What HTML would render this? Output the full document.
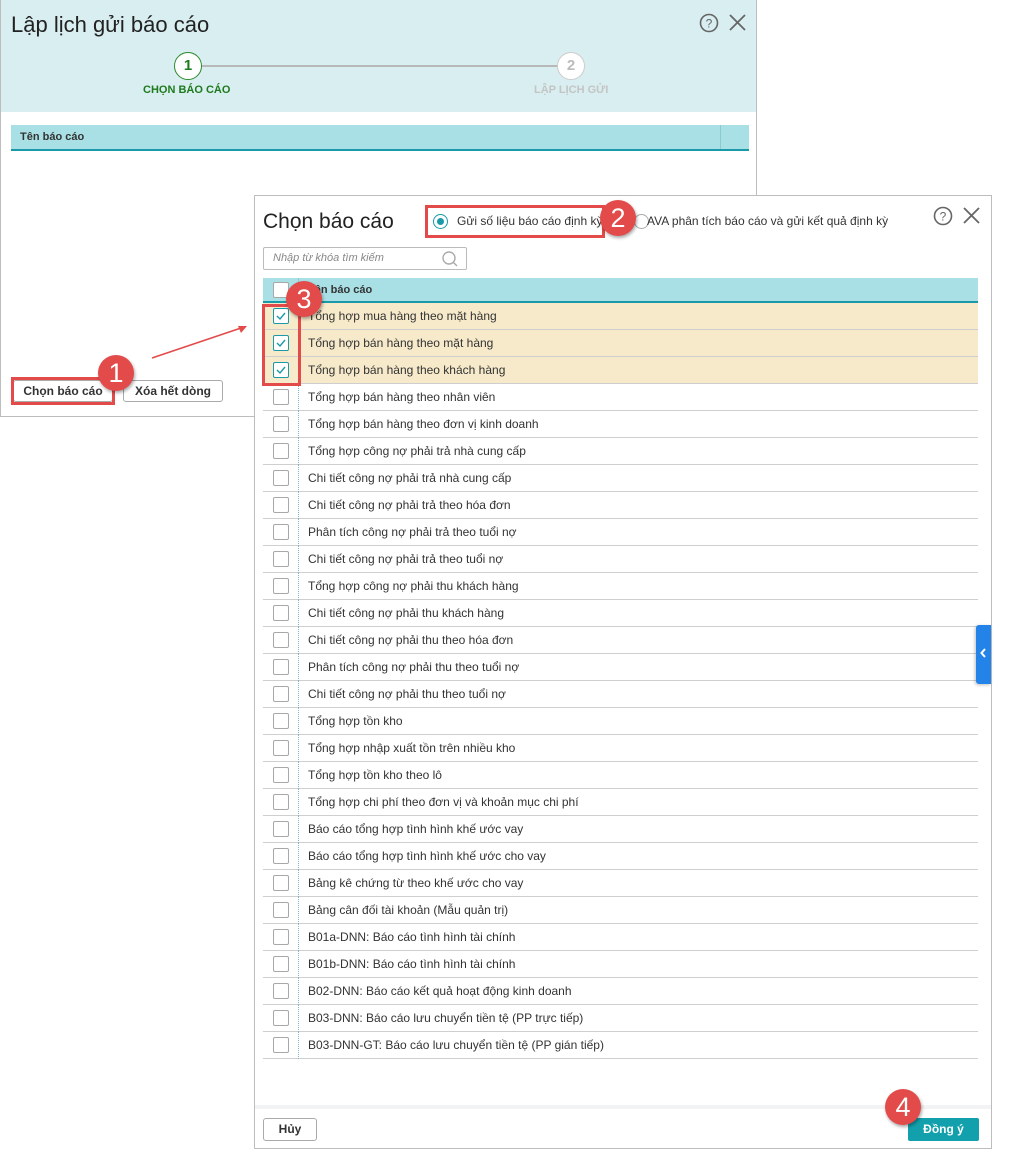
<!DOCTYPE html>
<html><head><meta charset="utf-8"><style>
*{box-sizing:border-box;margin:0;padding:0}
body{width:1009px;height:1158px;background:#fff;position:relative;overflow:hidden;font-family:"Liberation Sans",Arial,sans-serif;color:#222}
.abs{position:absolute}
.back{left:0;top:0;width:757px;height:417px;border:1px solid #bdbdbd;border-top:none;background:#fff}
.bhead{left:1px;top:0;width:755px;height:112px;background:#d9eef0}
.front{left:254px;top:195px;width:738px;height:954px;border:1px solid #bdbdbd;background:#fff}
.row{position:absolute;left:263px;width:715px;height:27px;border-bottom:1px solid #cfcfcf;font-size:12px;line-height:26px}
.row .cb{position:absolute;left:10px;top:5px;width:16px;height:16px;border:1px solid #a8a8a8;border-radius:2px;background:#fff}
.row .dv{position:absolute;left:35px;top:0;height:27px;border-left:1px dotted #7fb8c9}
.row .t{position:absolute;left:45px;top:0;color:#333}
.row.sel{background:#f7eacb}
.row.sel .cb{border-color:#1a9aa8}
.badge{position:absolute;width:36px;height:36px;border-radius:50%;background:#e34a4a;color:#fff;font-size:27px;line-height:36px;text-align:center;box-shadow:1px 2px 3px rgba(0,0,0,.35)}
.rbox{position:absolute;border:3px solid #e34a4a}
.btn{position:absolute;border:1px solid #aaa;border-radius:3px;background:#fff;font-size:12px;font-weight:bold;text-align:center;color:#333}
</style></head><body>
<div class="abs back"></div>
<div class="abs bhead"></div>
<div class="abs" style="left:11px;top:12px;font-size:22px;color:#222">Lập lịch gửi báo cáo</div>
<svg class="abs" style="left:699px;top:13px" width="50" height="20" viewBox="0 0 50 20"><circle cx="10" cy="10" r="8.5" fill="none" stroke="#666" stroke-width="1.6"/><text x="10" y="14.5" font-size="12" text-anchor="middle" fill="#666" font-family="Liberation Sans">?</text><path d="M31 2 L46 17 M46 2 L31 17" stroke="#666" stroke-width="1.8"/></svg>
<div class="abs" style="left:201px;top:65px;width:358px;height:2px;background:#b8b8b8"></div>
<div class="abs" style="left:174px;top:52px;width:28px;height:28px;border-radius:50%;border:1.5px solid #2a8a2a;background:#fff;color:#1e7a1e;font-weight:bold;font-size:15px;text-align:center;line-height:25px">1</div>
<div class="abs" style="left:557px;top:52px;width:28px;height:28px;border-radius:50%;border:1.5px solid #ccc;background:#fff;color:#bbb;font-weight:bold;font-size:15px;text-align:center;line-height:25px">2</div>
<div class="abs" style="left:143px;top:84px;font-size:11px;font-weight:bold;color:#1e7a1e">CHỌN BÁO CÁO</div>
<div class="abs" style="left:534px;top:84px;font-size:11px;font-weight:bold;color:#c4c4c4">LẬP LỊCH GỬI</div>
<div class="abs" style="left:11px;top:125px;width:738px;height:26px;background:#a9e0e5;border-bottom:2px solid #1a9aa8"></div>
<div class="abs" style="left:720px;top:125px;height:24px;border-left:1px solid #8cc"></div>
<div class="abs" style="left:20px;top:131px;font-size:11px;font-weight:bold;color:#333">Tên báo cáo</div>
<div class="btn" style="left:13px;top:380px;width:100px;height:22px;line-height:20px">Chọn báo cáo</div>
<div class="btn" style="left:123px;top:380px;width:100px;height:22px;line-height:20px">Xóa hết dòng</div>
<div class="rbox" style="left:11px;top:377px;width:104px;height:28px"></div>
<svg class="abs" style="left:0;top:0" width="1009" height="1158"><path d="M152 358 L244 327" stroke="#e34a4a" stroke-width="1.6"/><path d="M247 326 L238 326 L241 333 Z" fill="#e34a4a"/></svg>

<div class="abs front"></div>
<div class="abs" style="left:263px;top:210px;font-size:21px;color:#222">Chọn báo cáo</div>
<div class="abs" style="left:433px;top:214px;width:15px;height:15px;border-radius:50%;border:1.5px solid #1a9aa8"></div>
<div class="abs" style="left:437px;top:218px;width:7px;height:7px;border-radius:50%;background:#1a9aa8"></div>
<div class="abs" style="left:457px;top:214px;font-size:12px;color:#333">Gửi số liệu báo cáo định kỳ</div>
<div class="abs" style="left:634px;top:214px;width:15px;height:15px;border-radius:50%;border:1.5px solid #aaa"></div>
<div class="abs" style="left:647px;top:214px;font-size:12px;color:#333">AVA phân tích báo cáo và gửi kết quả định kỳ</div>
<svg class="abs" style="left:933px;top:206px" width="50" height="20" viewBox="0 0 50 20"><circle cx="10" cy="10" r="8.5" fill="none" stroke="#666" stroke-width="1.6"/><text x="10" y="14.5" font-size="12" text-anchor="middle" fill="#666" font-family="Liberation Sans">?</text><path d="M31 2 L46 17 M46 2 L31 17" stroke="#666" stroke-width="1.8"/></svg>
<div class="abs" style="left:263px;top:247px;width:204px;height:23px;border:1px solid #bbb;border-radius:2px"></div>
<div class="abs" style="left:273px;top:252px;font-size:11px;font-style:italic;color:#888">Nhập từ khóa tìm kiếm</div>
<svg class="abs" style="left:441px;top:250px" width="18" height="18"><circle cx="8" cy="8" r="6" fill="none" stroke="#aaa" stroke-width="1.4"/><path d="M12.5 12.5 L16 16" stroke="#aaa" stroke-width="1.4"/></svg>
<div class="abs" style="left:263px;top:278px;width:715px;height:25px;background:#a9e0e5;border-bottom:2px solid #1a9aa8"></div>
<div class="abs" style="left:273px;top:282px;width:16px;height:16px;border:1px solid #a8a8a8;border-radius:2px;background:#fff"></div>
<div class="abs" style="left:298px;top:278px;height:24px;border-left:1px solid #8cc"></div>
<div class="abs" style="left:308px;top:284px;font-size:11px;font-weight:bold;color:#333">Tên báo cáo</div>
<div id="rows"></div>
<div class="abs" style="left:255px;top:1105px;width:736px;height:4px;background:#f1f3f5"></div>
<div class="btn" style="left:263px;top:1118px;width:54px;height:23px;line-height:21px">Hủy</div>
<div class="abs" style="left:908px;top:1118px;width:71px;height:23px;background:#12a0ad;border-radius:2px;color:#fff;font-weight:bold;font-size:12px;text-align:center;line-height:23px">Đồng ý</div>
<div class="abs" style="left:976px;top:625px;width:15px;height:59px;background:#2383e8;border-radius:3px 0 0 3px;box-shadow:-1px 1px 3px rgba(0,0,0,.25)"></div>
<svg class="abs" style="left:979px;top:647px" width="9" height="12"><path d="M6 2 L2.5 6 L6 10" stroke="#fff" stroke-width="2" fill="none"/></svg>

<div class="rbox" style="left:425px;top:205px;width:180px;height:33px"></div>
<div class="rbox" style="left:262px;top:304px;width:39px;height:82px"></div>
<div class="badge" style="left:98px;top:355px">1</div>
<div class="badge" style="left:600px;top:200px">2</div>
<div class="badge" style="left:286px;top:281px">3</div>
<div class="badge" style="left:885px;top:1089px">4</div>
<script>
var items=["Tổng hợp mua hàng theo mặt hàng","Tổng hợp bán hàng theo mặt hàng","Tổng hợp bán hàng theo khách hàng","Tổng hợp bán hàng theo nhân viên","Tổng hợp bán hàng theo đơn vị kinh doanh","Tổng hợp công nợ phải trả nhà cung cấp","Chi tiết công nợ phải trả nhà cung cấp","Chi tiết công nợ phải trả theo hóa đơn","Phân tích công nợ phải trả theo tuổi nợ","Chi tiết công nợ phải trả theo tuổi nợ","Tổng hợp công nợ phải thu khách hàng","Chi tiết công nợ phải thu khách hàng","Chi tiết công nợ phải thu theo hóa đơn","Phân tích công nợ phải thu theo tuổi nợ","Chi tiết công nợ phải thu theo tuổi nợ","Tổng hợp tồn kho","Tổng hợp nhập xuất tồn trên nhiều kho","Tổng hợp tồn kho theo lô","Tổng hợp chi phí theo đơn vị và khoản mục chi phí","Báo cáo tổng hợp tình hình khế ước vay","Báo cáo tổng hợp tình hình khế ước cho vay","Bảng kê chứng từ theo khế ước cho vay","Bảng cân đối tài khoản (Mẫu quản trị)","B01a-DNN: Báo cáo tình hình tài chính","B01b-DNN: Báo cáo tình hình tài chính","B02-DNN: Báo cáo kết quả hoạt động kinh doanh","B03-DNN: Báo cáo lưu chuyển tiền tệ (PP trực tiếp)","B03-DNN-GT: Báo cáo lưu chuyển tiền tệ (PP gián tiếp)"];
var h="";
items.forEach(function(t,i){var s=i<3;h+='<div class="row'+(s?' sel':'')+'" style="top:'+(303+i*27)+'px"><div class="cb">'+(s?'<svg width="14" height="14" style="position:absolute;left:0;top:0"><path d="M3 7 L6 10 L11 4" stroke="#1a9aa8" stroke-width="1.4" fill="none"/></svg>':'')+'</div><div class="dv"></div><div class="t">'+t+'</div></div>';});
document.getElementById("rows").innerHTML=h;
</script>
</body></html>
